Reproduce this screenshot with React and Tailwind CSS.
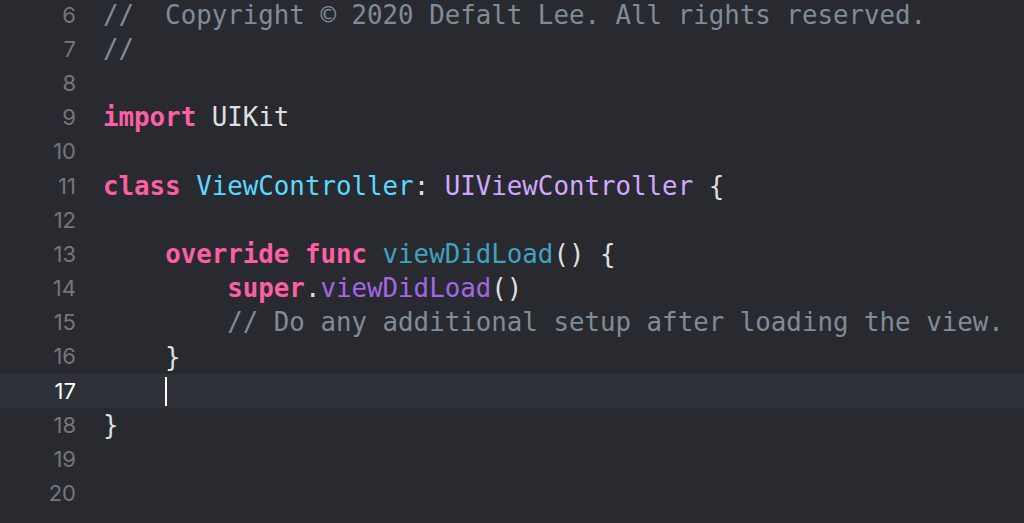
import React from 'react';

const mono = "font-['DejaVu_Sans_Mono','Liberation_Mono',monospace]";

const K = ({ children }) => <span className="font-bold text-[#fc5fa3]">{children}</span>;
const C = ({ children }) => <span className="text-[#7f8c98]">{children}</span>;
const Decl = ({ children }) => <span className="text-[#5dd8ff]">{children}</span>;
const Type = ({ children }) => <span className="text-[#d0a8ff]">{children}</span>;
const Fn = ({ children }) => <span className="text-[#41a1c0]">{children}</span>;
const Call = ({ children }) => <span className="text-[#a167e6]">{children}</span>;

const lines = [
    { n: 6, code: <C>{'//  Copyright © 2020 Defalt Lee. All rights reserved.'}</C> },
    { n: 7, code: <C>{'//'}</C> },
    { n: 8, code: null },
    { n: 9, code: <><K>import</K> UIKit</> },
    { n: 10, code: null },
    { n: 11, code: <><K>class</K> <Decl>ViewController</Decl>: <Type>UIViewController</Type> {'{'}</> },
    { n: 12, code: null },
    { n: 13, code: <>{'    '}<K>override</K> <K>func</K> <Fn>viewDidLoad</Fn>() {'{'}</> },
    { n: 14, code: <>{'        '}<K>super</K>.<Call>viewDidLoad</Call>()</> },
    { n: 15, code: <>{'        '}<C>// Do any additional setup after loading the view.</C></> },
    { n: 16, code: <>{'    }'}</> },
    { n: 17, code: null, current: true },
    { n: 18, code: '}' },
    { n: 19, code: null },
    { n: 20, code: null },
];

export default function App() {
    return (
        <div className="w-[1024px] h-[523px] overflow-hidden bg-[#292a30]">
            <div className="-mt-[2px] flex flex-col">
                {lines.map((line) => (
                    <div
                        key={line.n}
                        className={`flex h-[34.2px] items-center ${line.current ? 'bg-[#2f3139]' : ''}`}
                    >
                        <div
                            className={`w-[76px] shrink-0 text-right font-['Inter',sans-serif] text-[22px] ${line.current ? 'text-white' : 'text-[#75767b]'}`}
                        >
                            {line.n}
                        </div>
                        {line.current ? (
                            <div className="ml-[89px] h-[29px] w-[2px] bg-white" />
                        ) : (
                            <div className={`pl-[27px] whitespace-pre text-[25.8px] text-[#dfdfe0] ${mono}`}>
                                {line.code}
                            </div>
                        )}
                    </div>
                ))}
            </div>
        </div>
    );
}
